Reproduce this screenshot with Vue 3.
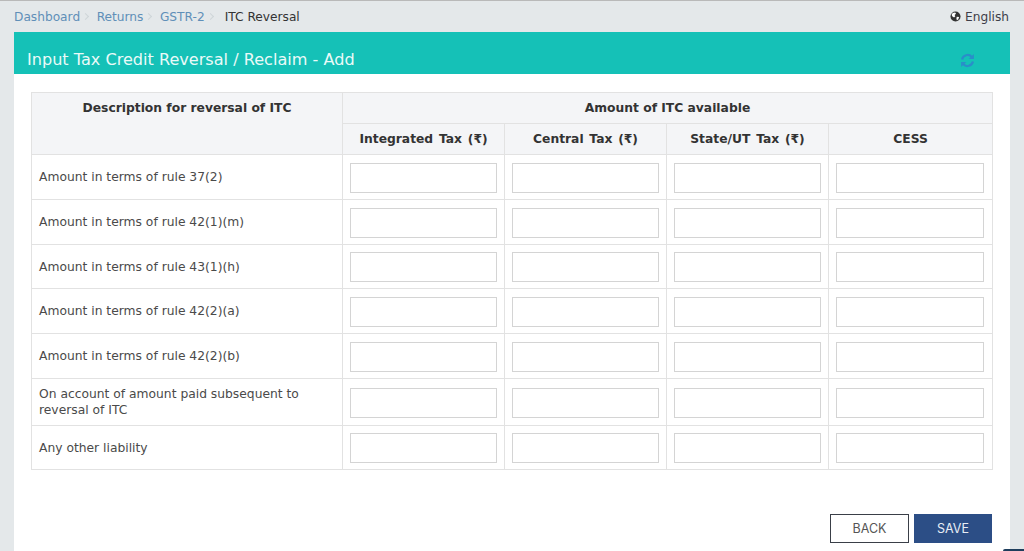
<script setup>
const taxHeads = ['Integrated Tax (₹)', 'Central Tax (₹)', 'State/UT Tax (₹)', 'CESS']
const rows = [
  { label: 'Amount in terms of rule 37(2)', cls: 'h45' },
  { label: 'Amount in terms of rule 42(1)(m)', cls: 'h45' },
  { label: 'Amount in terms of rule 43(1)(h)', cls: 'h44' },
  { label: 'Amount in terms of rule 42(2)(a)', cls: 'h45' },
  { label: 'Amount in terms of rule 42(2)(b)', cls: 'h45' },
  { label: 'On account of amount paid subsequent to reversal of ITC', cls: 'h47' },
  { label: 'Any other liability', cls: 'h44' }
]
</script>

<template>
  <div class="page">
    <div class="topbar">
      <nav class="crumbs">
        <a>Dashboard</a><i class="sep"></i>
        <a>Returns</a><i class="sep"></i>
        <a>GSTR-2</a><i class="sep last"></i>
        <span>ITC Reversal</span>
      </nav>
      <div class="lang">
        <svg class="globe" viewBox="0 0 12 12" width="11" height="11">
          <circle cx="6" cy="6" r="5.5" fill="#333"/>
          <path d="M3 2.2 5.6 1.6 6.6 3 5 4.4 5.8 5.8 4.4 7.2 2.4 5.6 1.8 4zM7.4 6.2 10 6.6 9 9.4 7.4 10.2 7 8z" fill="#fff"/>
        </svg>
        <span>English</span>
      </div>
    </div>
    <main class="card">
      <header class="head">
        <h1>Input Tax Credit Reversal / Reclaim - Add</h1>
        <svg class="refresh" viewBox="0 0 16 16" width="15" height="15" fill="none" stroke="#2a8ec9" stroke-width="2.4">
          <path d="M2.2 7A6 6 0 0 1 12.6 4.2"/>
          <path d="M13.8 9A6 6 0 0 1 3.4 11.8"/>
          <path d="M14.8 1v5.4h-5.4z" fill="#2a8ec9" stroke="none"/>
          <path d="M1.2 15V9.6h5.4z" fill="#2a8ec9" stroke="none"/>
        </svg>
      </header>
      <div class="body">
        <table>
          <colgroup>
            <col class="c0" /><col class="c1" /><col class="c1" /><col class="c1" /><col class="c2" />
          </colgroup>
          <thead>
            <tr class="h30">
              <th rowspan="2" class="desc">Description for reversal of ITC</th>
              <th colspan="4">Amount of ITC available</th>
            </tr>
            <tr class="h31">
              <th v-for="t in taxHeads" :key="t" class="tax">{{ t }}</th>
            </tr>
          </thead>
          <tbody>
            <tr v-for="r in rows" :key="r.label" :class="r.cls">
              <td class="label">{{ r.label }}</td>
              <td v-for="t in taxHeads" :key="t" class="cell"><input type="text" /></td>
            </tr>
          </tbody>
        </table>
        <div class="actions">
          <button class="back">BACK</button>
          <button class="save">SAVE</button>
        </div>
      </div>
    </main>
    <div class="corner"></div>
  </div>
</template>

<style>
html, body { margin: 0; height: 100%; overflow: hidden; background: #e4e8ea; }
</style>

<style scoped>
.page {
  position: relative;
  height: 551px;
  overflow: hidden;
  background: #e4e8ea;
  border-top: 1px solid #b9b9b9;
  box-sizing: border-box;
  padding: 0 14px;
  font-family: "DejaVu Sans", Verdana, sans-serif;
  color: #333;
}
.topbar {
  height: 31px;
  display: flex;
  align-items: center;
  justify-content: space-between;
  font-size: 12.2px;
}
.crumbs { display: flex; align-items: center; }
.crumbs a { color: #5f8fb8; }
.crumbs span { color: #333; }
.sep {
  width: 4px;
  height: 4px;
  margin: 0 8.5px 0 3px;
  border-top: 1px solid #cfd5d8;
  border-right: 1px solid #cfd5d8;
  transform: rotate(45deg);
}
.sep.last { margin-right: 12px; }
.lang { display: flex; align-items: center; gap: 4px; color: #3d3d48; margin-right: 1px; font-size: 12.2px; }
.globe { display: block; }
.card { background: #fff; height: 519px; }
.head {
  height: 42px;
  background: #15c1b7;
  display: flex;
  align-items: flex-end;
  justify-content: space-between;
  padding: 0 35px 4px 13px;
  box-sizing: border-box;
}
.head h1 {
  margin: 0;
  font-size: 16.1px;
  font-weight: 400;
  line-height: 20px;
  color: #eafaf8;
}
.refresh { display: block; margin-bottom: 2px; }
.body { padding: 19px 18px 0 17px; }
table {
  border-collapse: collapse;
  table-layout: fixed;
  width: 961px;
  font-size: 12.3px;
  border: 1px solid #dcdcdc;
  border-top-color: #d0d0d0;
  margin-top: -1px;
}
.c0 { width: 311px; }
.c1 { width: 162px; }
.c2 { width: 164px; }
th, td { border: 1px solid #e2e2e2; padding: 0; }
th {
  background: #f4f5f7;
  font-weight: 700;
  color: #333;
  text-align: center;
  vertical-align: middle;
}
th.desc { vertical-align: top; padding-top: 8px; }
th.tax { word-spacing: 1.5px; }
.h30 { height: 31px; }
.h31 { height: 31px; }
.h44 { height: 44px; }
.h45 { height: 45px; }
.h47 { height: 47px; }
.label {
  padding: 0 40px 0 7px;
  line-height: 16px;
  color: #4a4a4a;
}
.cell { padding: 1px 0 0 7px; }
input {
  display: block;
  box-sizing: border-box;
  width: 147px;
  height: 30px;
  background: #fff;
  border: 1px solid #d4d4d4;
  padding: 0;
}
.cell:last-child input { width: 148px; }
.actions {
  display: flex;
  justify-content: flex-end;
  gap: 5px;
  margin-top: 44px;
}
button {
  box-sizing: border-box;
  height: 29px;
  font-family: Inter, "Liberation Sans", sans-serif;
  font-size: 12.5px;
  padding: 0;
}
.back { width: 79px; background: #fff; color: #555; border: 1px solid #3a3f48; }
.save { width: 78px; background: #2c4e86; color: #e8edf5; border: 0; }
.corner {
  position: absolute;
  right: 0;
  bottom: 0;
  width: 21px;
  height: 2px;
  border-radius: 3px 0 0 0;
  background: #1e3d5c;
}
</style>
